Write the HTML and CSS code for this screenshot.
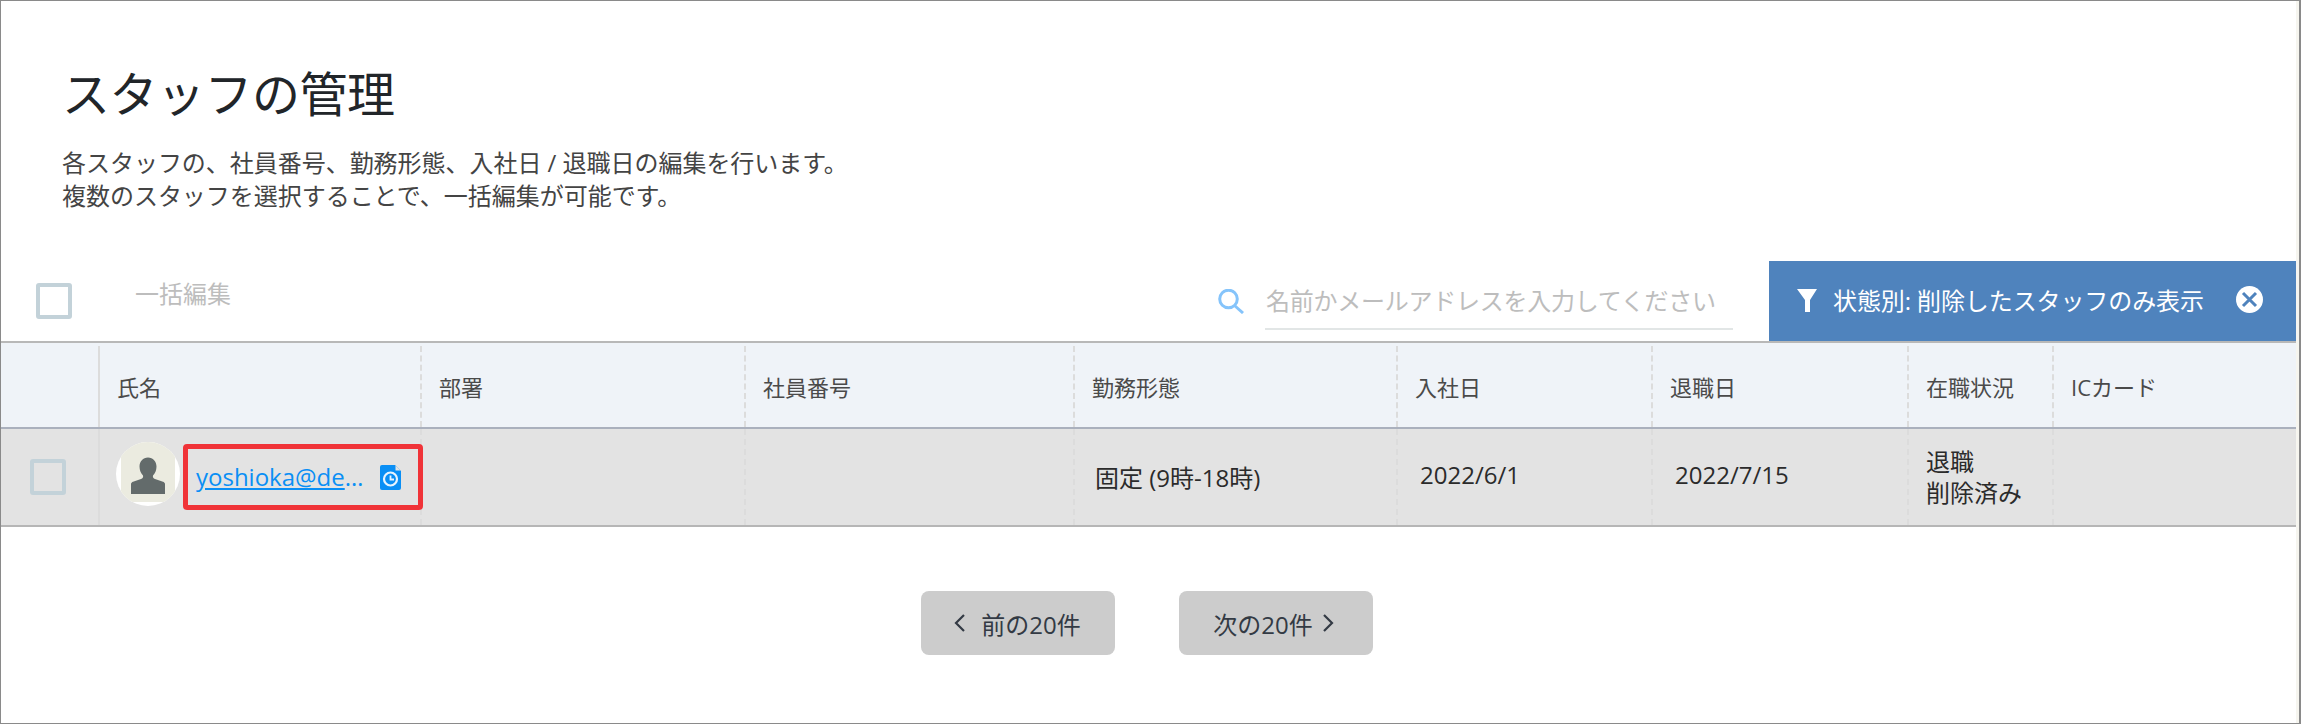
FILE: index.html
```html
<!DOCTYPE html>
<html lang="ja">
<head>
<meta charset="utf-8">
<title>スタッフの管理</title>
<link rel="stylesheet" href="styles.css">
</head>
<body>
<div class="frame">
  <main class="page">
    <header class="intro">
      <h1 class="title">スタッフの管理</h1>
      <p class="desc">各スタッフの、社員番号、勤務形態、入社日 / 退職日の編集を行います。<br>複数のスタッフを選択することで、一括編集が可能です。</p>
    </header>

    <div class="toolbar">
      <span class="checkbox checkbox-top"></span>
      <span class="bulk">一括編集</span>
      <div class="search">
        <svg class="search-icon" width="26" height="25" viewBox="0 0 26 25"><circle cx="10.5" cy="10" r="8.8" fill="none" stroke="#85c4fb" stroke-width="3"/><path d="M16.5 16.5L25 24" fill="none" stroke="#85c4fb" stroke-width="3"/></svg>
        <span class="search-field">名前かメールアドレスを入力してください</span>
      </div>
      <div class="filter">
        <svg class="filter-icon" width="20" height="23" viewBox="0 0 20 23"><path d="M0 0H20L13 11V23H8V11Z" fill="#fff"/></svg>
        <span class="filter-label">状態別: 削除したスタッフのみ表示</span>
        <svg class="filter-close" width="27" height="27" viewBox="0 0 27 27"><circle cx="13.5" cy="13.5" r="13.5" fill="#fff"/><path d="M7 7L20 20M20 7L7 20" fill="none" stroke="#4f83bd" stroke-width="3"/></svg>
      </div>
    </div>

    <div class="table">
      <div class="row head">
        <div class="cell cell-check"></div>
        <div class="cell cell-solid">氏名</div>
        <div class="cell">部署</div>
        <div class="cell">社員番号</div>
        <div class="cell">勤務形態</div>
        <div class="cell">入社日</div>
        <div class="cell">退職日</div>
        <div class="cell">在職状況</div>
        <div class="cell">ICカード</div>
      </div>
      <div class="row body">
        <div class="cell cell-check"><span class="checkbox"></span></div>
        <div class="cell cell-solid cell-name">
          <svg class="avatar" width="64" height="64" viewBox="0 0 64 64">
            <defs><clipPath id="avatar-clip"><circle cx="32" cy="32" r="32"/></clipPath></defs>
            <circle cx="32" cy="32" r="32" fill="#fff"/>
            <rect x="5" y="0" width="54" height="60" fill="#ebebe0" clip-path="url(#avatar-clip)"/>
            <path d="M15 52V42c0-1 1-2 2-2.3l8-2.7c1.500-.5 2.500-1.500 2-3.500-2-2-3.500-5-3.500-9 0-5 3.500-9 8.500-9s8.500 4 8.500 9c0 4-1.500 7-3.500 9-.5 2 .5 3 2 3.500l8 2.700c1 .3 2 1.300 2 2.300v10z" fill="#636b6b"/>
          </svg>
          <div class="highlight">
            <span class="email"><a class="email-link" href="#">yoshioka@de</a>…</span>
            <svg class="doc-icon" width="21" height="25" viewBox="0 0 21 25"><path d="M2 0H15L21 6V23a2 2 0 0 1-2 2H2a2 2 0 0 1-2-2V2a2 2 0 0 1 2-2Z" fill="#0a8ff5"/><path d="M15.500 .5L20.500 5.500H15.500Z" fill="#e3e3e3"/><circle cx="10.500" cy="14" r="6.500" fill="none" stroke="#e8f4fe" stroke-width="2.200"/><path d="M10.500 10.500V14.500H14" fill="none" stroke="#e8f4fe" stroke-width="1.800"/></svg>
          </div>
        </div>
        <div class="cell"></div>
        <div class="cell"></div>
        <div class="cell cell-shift cell-low">固定 (9時-18時)</div>
        <div class="cell cell-shift">2022/6/1</div>
        <div class="cell cell-shift">2022/7/15</div>
        <div class="cell"><div>退職<br>削除済み</div></div>
        <div class="cell"></div>
      </div>
    </div>

    <nav class="pager">
      <a class="pager-btn" href="#"><svg class="chev chev-prev" width="11" height="18" viewBox="0 0 11 18"><path d="M10 1L2 9L10 17" fill="none" stroke="#333a44" stroke-width="2.200"/></svg>前の20件</a>
      <a class="pager-btn" href="#">次の20件<svg class="chev chev-next" width="11" height="18" viewBox="0 0 11 18"><path d="M1 1L9 9L1 17" fill="none" stroke="#333a44" stroke-width="2.200"/></svg></a>
    </nav>
  </main>
</div>
</body>
</html>
```

FILE: styles.css
```css
* { box-sizing: border-box; }

html, body { margin: 0; padding: 0; background: #fff; }

body {
  width: 2302px;
  height: 724px;
  overflow: hidden;
  font-family: "Open Sans", "Noto Sans CJK JP", sans-serif;
  color: #333;
}

.frame {
  width: 2301px;
  height: 724px;
  border: 1px solid #8a8a8a;
  border-width: 1px 2px 1px 1px;
  background: #f6f5ef;
}

.page {
  width: 2295px;
  height: 100%;
  background: #fff;
}

.intro { padding: 57px 0 0 61px; height: 260px; }

.title {
  margin: 0;
  font-size: 48px;
  font-weight: 400;
  line-height: 72px;
  letter-spacing: -0.5px;
  color: #212529;
}

.desc {
  margin: 16px 0 0;
  font-size: 24px;
  line-height: 33px;
  letter-spacing: -0.03px;
  color: #444;
}

.toolbar {
  display: flex;
  align-items: flex-start;
  height: 80px;
  padding-left: 35px;
}

.checkbox {
  display: block;
  width: 36px;
  height: 36px;
  border: 4px solid #c3d2d9;
  border-radius: 3px;
}

.checkbox-top { margin-top: 22px; }

.bulk {
  margin: 16px 0 0 63px;
  font-size: 24px;
  line-height: 34px;
  color: #bdbdbd;
}

.search {
  display: flex;
  align-items: flex-start;
  margin-left: auto;
  padding-top: 28px;
}

.search-icon { margin-right: 21px; }

.search-field {
  width: 468px;
  height: 49px;
  margin-top: -8px;
  padding: 3px 0 0 1px;
  font-size: 24px;
  line-height: 34px;
  letter-spacing: -0.25px;
  color: #bdbdbd;
  border-bottom: 2px solid #e2e6e6;
}

.filter {
  display: flex;
  align-items: center;
  flex: none;
  width: 527px;
  height: 80px;
  margin-left: 36px;
  padding: 0 0 0 28px;
  background: #4f83bd;
  color: #fff;
}

.filter-icon { margin: -2px 16px 0 0; }

.filter-label { font-size: 24px; line-height: 34px; letter-spacing: -0.1px; white-space: nowrap; }

.filter-close { margin: -4px 0 0 32px; flex: none; }

.row {
  display: grid;
  grid-template-columns: 97px 322px 324px 329px 323px 255px 256px 145px 244px;
}

.head {
  height: 88px;
  border-top: 2px solid #b8b8b8;
  border-bottom: 2px solid #aab0bd;
  background: #eff3f8;
  font-size: 22px;
  line-height: 30px;
  color: #4a4a4a;
}

.body {
  height: 98px;
  border-bottom: 2px solid #b6b6b6;
  background: #e3e3e3;
  font-size: 24px;
  line-height: 31px;
  color: #2b2b2b;
}

.cell {
  display: flex;
  align-items: center;
  min-width: 0;
  padding-left: 17px;
  border-left: 2px dashed #dcdcdc;
}

.head .cell { margin-top: 3px; }

.cell-check { border-left: 0; padding-left: 29px; }

.cell-solid { border-left: 2px solid #dcdcdc; }

.cell-shift { padding: 0 0 5px 22px; }

.cell-low { padding: 0 0 0 20px; }

.cell-name { gap: 3px; padding-left: 16px; }

.avatar { flex: none; margin-bottom: 6px; }

.highlight {
  position: relative;
  z-index: 1;
  display: flex;
  align-items: center;
  flex: none;
  width: 240px;
  height: 66px;
  padding-left: 8px;
  border: 5px solid #f03338;
  border-radius: 4px;
}

.email {
  width: 184px;
  font-size: 24px;
  line-height: 32px;
  color: #0a8ff5;
  white-space: nowrap;
}

.email-link { color: inherit; text-decoration: underline; }

.doc-icon { flex: none; margin-top: 1px; }

.pager {
  display: flex;
  justify-content: center;
  gap: 64px;
  margin-top: 64px;
  padding-right: 4px;
}

.pager-btn {
  display: flex;
  align-items: center;
  justify-content: center;
  width: 194px;
  height: 64px;
  border-radius: 8px;
  background: #ccc;
  color: #333a44;
  font-size: 24px;
  text-decoration: none;
}

.chev-prev { margin-right: 16px; }

.chev-next { margin: 0 4px 0 10px; }
```
